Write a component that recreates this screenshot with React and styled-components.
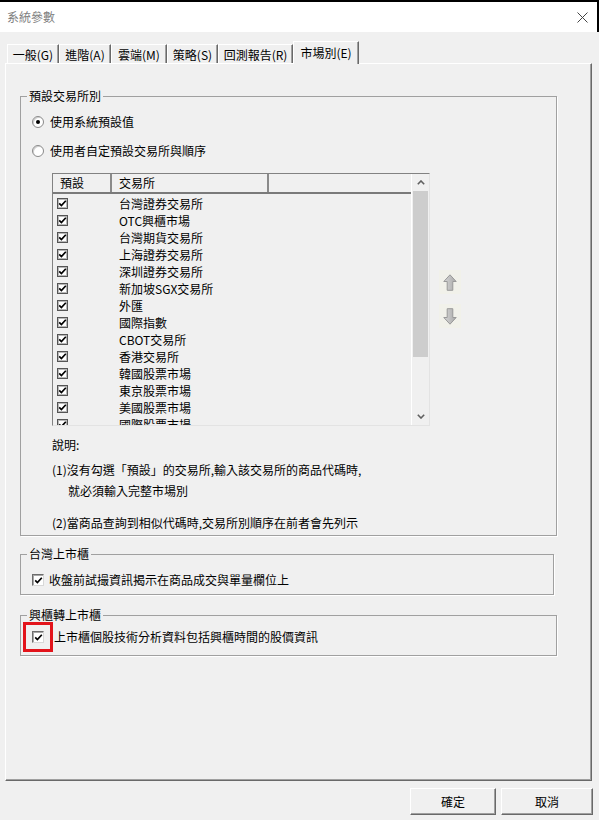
import React from "react"
import styled, { createGlobalStyle } from "styled-components"

const GlobalStyle = createGlobalStyle`
  html, body {
    margin: 0;
    padding: 0;
    background: #f0f0f0;
  }
  body {
    font-family: "Noto Sans CJK TC", "Liberation Sans", sans-serif;
    font-size: 12px;
    line-height: 16px;
    color: #000;
  }
`

const exchanges = [
  "台灣證券交易所",
  "OTC興櫃市場",
  "台灣期貨交易所",
  "上海證券交易所",
  "深圳證券交易所",
  "新加坡SGX交易所",
  "外匯",
  "國際指數",
  "CBOT交易所",
  "香港交易所",
  "韓國股票市場",
  "東京股票市場",
  "美國股票市場",
  "國際股票市場",
]

const tabs = [
  { label: "一般(G)", w: 52 },
  { label: "進階(A)", w: 52 },
  { label: "雲端(M)", w: 56 },
  { label: "策略(S)", w: 51 },
  { label: "回測報告(R)", w: 75 },
  { label: "市場別(E)", w: 66, active: true },
]

function CheckMark() {
  return (
    <svg width="9" height="9" viewBox="0 0 9 9">
      <path d="M1.2 4.4 L3.4 6.6 L7.8 1.8" fill="none" stroke="#000" strokeWidth="1.7" />
    </svg>
  )
}

function BlockArrow({ down }) {
  const id = down ? "gdown" : "gup"
  return (
    <svg width="14" height="17" viewBox="0 0 14 17" style={down ? { transform: "scaleY(-1)" } : undefined}>
      <defs>
        <linearGradient id={id} x1="0" y1="0" x2="1" y2="0">
          <stop offset="0" stopColor="#d6d6d6" />
          <stop offset="1" stopColor="#a9a9a9" />
        </linearGradient>
      </defs>
      <path d="M7 0.8 L13.2 7.5 L9.8 7.5 L9.8 16.3 L4.2 16.3 L4.2 7.5 L0.8 7.5 Z" fill={`url(#${id})`} stroke="#999" strokeWidth="1" />
    </svg>
  )
}

function Chevron({ down }) {
  return (
    <svg width="8" height="5" viewBox="0 0 8 5">
      <path d={down ? "M0.8 0.8 L4 4 L7.2 0.8" : "M0.8 4.2 L4 1 L7.2 4.2"} fill="none" stroke="#606060" strokeWidth="1.6" />
    </svg>
  )
}

export default function App() {
  return (
    <>
      <GlobalStyle />
      <Window>
        <TitleBar>
          <Title>系統參數</Title>
          <CloseIcon width="11" height="11" viewBox="0 0 11 11">
            <path d="M0.5 0.5 L10.5 10.5 M10.5 0.5 L0.5 10.5" stroke="#444" strokeWidth="1" />
          </CloseIcon>
        </TitleBar>

        <Body>
          <TabStrip>
            {tabs.map(t => (
              <Tab key={t.label} $w={t.w} $active={t.active}>{t.label}</Tab>
            ))}
          </TabStrip>

          <Panel>
            <Group $w={537}>
              <Legend>預設交易所別</Legend>
              <GroupBody $top={10} $bottom={4}>
                <RadioRow>
                  <Radio $on />
                  <span>使用系統預設值</span>
                </RadioRow>
                <RadioRow $mt={13}>
                  <Radio />
                  <span>使用者自定預設交易所與順序</span>
                </RadioRow>

                <ListArea>
                  <ListView>
                    <ListMain>
                      <Header>
                        <HeadCell $w={59}>預設</HeadCell>
                        <HeadCell $w={157}>交易所</HeadCell>
                        <HeadCell $grow />
                      </Header>
                      <Rows>
                        {exchanges.map(name => (
                          <Row key={name}>
                            <CheckCell>
                              <Check $size={11}><CheckMark /></Check>
                            </CheckCell>
                            <NameCell>{name}</NameCell>
                          </Row>
                        ))}
                      </Rows>
                    </ListMain>
                    <ScrollBar>
                      <ScrollButton><Chevron /></ScrollButton>
                      <Thumb />
                      <ScrollTrack />
                      <ScrollButton><Chevron down /></ScrollButton>
                    </ScrollBar>
                  </ListView>

                  <MoveButtons>
                    <MoveButton><BlockArrow /></MoveButton>
                    <MoveButton><BlockArrow down /></MoveButton>
                  </MoveButtons>
                </ListArea>

                <Note $mt={11}>說明:</Note>
                <Note $mt={9}>(1)沒有勾選「預設」的交易所,輸入該交易所的商品代碼時,</Note>
                <Note $mt={5} $indent={16}>就必須輸入完整市場別</Note>
                <Note $mt={16}>(2)當商品查詢到相似代碼時,交易所別順序在前者會先列示</Note>
              </GroupBody>
            </Group>

            <Group $w={534} $mt={10}>
              <Legend>台灣上市櫃</Legend>
              <GroupBody $top={10} $bottom={6}>
                <CheckRow $gap={5}>
                  <Check $size={12} $sunken><CheckMark /></Check>
                  <span>收盤前試撮資訊揭示在商品成交與單量欄位上</span>
                </CheckRow>
              </GroupBody>
            </Group>

            <Group $w={537} $mt={12}>
              <Legend>興櫃轉上市櫃</Legend>
              <GroupBody $top={6} $bottom={10}>
                <CheckRow $gap={10}>
                  <Marked>
                    <Check $size={12} $sunken><CheckMark /></Check>
                    <RedMark />
                  </Marked>
                  <span>上市櫃個股技術分析資料包括興櫃時間的股價資訊</span>
                </CheckRow>
              </GroupBody>
            </Group>
          </Panel>

          <ButtonRow>
            <Button $w={86}>確定</Button>
            <Button $w={92}>取消</Button>
          </ButtonRow>
        </Body>
      </Window>
    </>
  )
}

const Window = styled.div`
  width: 599px;
  height: 820px;
  box-sizing: border-box;
  border-top: 2px solid #000;
  display: flex;
  flex-direction: column;
  background: #f0f0f0;
  overflow: hidden;
`

const TitleBar = styled.div`
  height: 30px;
  flex: none;
  background: #fff;
  border-right: 2px solid #000;
  display: flex;
  align-items: center;
  justify-content: space-between;
  padding: 0 9px 0 7px;
`

const Title = styled.span`
  color: #808080;
  font-size: 12px;
`

const CloseIcon = styled.svg`
  display: block;
`

const Body = styled.div`
  flex: 1;
  display: flex;
  flex-direction: column;
  padding: 9px 7px 5px 5px;
  min-height: 0;
`

const TabStrip = styled.div`
  height: 22px;
  flex: none;
  display: flex;
  align-items: flex-end;
  padding-left: 2px;
  position: relative;
  z-index: 1;
`

const Tab = styled.div`
  width: ${p => p.$w}px;
  height: ${p => (p.$active ? 23 : 19)}px;
  margin-bottom: ${p => (p.$active ? -1 : 0)}px;
  box-sizing: border-box;
  flex: none;
  display: flex;
  align-items: center;
  justify-content: center;
  padding-top: ${p => (p.$active ? 0 : 1)}px;
  background: #f0f0f0;
  border-top: 1px solid #fff;
  border-left: 1px solid #fff;
  border-right: 1px solid #696969;
  box-shadow: inset -1px 0 0 #a0a0a0;
  white-space: nowrap;
`

const Panel = styled.div`
  flex: 1;
  box-sizing: border-box;
  border-top: 1px solid #fff;
  border-left: 1px solid #fff;
  border-right: 1px solid #696969;
  border-bottom: 1px solid #696969;
  box-shadow: inset -1px -1px 0 #a0a0a0;
  padding: 24px 0 0 14px;
  display: flex;
  flex-direction: column;
  align-items: flex-start;
`

const Group = styled.fieldset`
  margin: ${p => p.$mt || 0}px 0 0 0;
  padding: 0;
  min-width: 0;
  width: ${p => p.$w}px;
  box-sizing: border-box;
  border: 1px solid #a0a0a0;
  box-shadow: 1px 1px 0 #fff;
`

const Legend = styled.legend`
  margin-left: 6px;
  padding: 0 2px;
  line-height: 16px;
`

const GroupBody = styled.div`
  display: flex;
  flex-direction: column;
  align-items: flex-start;
  padding: ${p => p.$top}px 0 ${p => p.$bottom}px 11px;
`

const RadioRow = styled.div`
  display: flex;
  align-items: center;
  gap: 6px;
  height: 16px;
  margin-top: ${p => p.$mt || 0}px;
`

const Radio = styled.span`
  width: 12px;
  height: 12px;
  box-sizing: border-box;
  border-radius: 50%;
  border: 1px solid #8a8a8a;
  background: #fff;
  display: inline-flex;
  align-items: center;
  justify-content: center;
  box-shadow: inset 1px 1px 0 #d0d0d0;
  &::after {
    content: "";
    width: 4px;
    height: 4px;
    border-radius: 50%;
    background: ${p => (p.$on ? "#000" : "transparent")};
  }
`

const ListArea = styled.div`
  display: flex;
  margin: 14px 0 0 20px;
`

const ListView = styled.div`
  width: 378px;
  height: 253px;
  box-sizing: border-box;
  display: flex;
  border-top: 1px solid #828282;
  border-left: 1px solid #828282;
  border-right: 1px solid #e3e3e3;
  border-bottom: 1px solid #e3e3e3;
  background: #f0f0f0;
`

const ListMain = styled.div`
  flex: 1;
  display: flex;
  flex-direction: column;
  overflow: hidden;
`

const Header = styled.div`
  height: 18px;
  flex: none;
  display: flex;
  border-bottom: 2px solid #7a7a7a;
`

const HeadCell = styled.div`
  width: ${p => (p.$grow ? "auto" : `${p.$w}px`)};
  flex: ${p => (p.$grow ? 1 : "none")};
  box-sizing: border-box;
  padding-left: 7px;
  display: flex;
  align-items: center;
  border-right: ${p => (p.$grow ? "none" : "2px solid #8a8a8a")};
`

const Rows = styled.div`
  padding-top: 1px;
`

const Row = styled.div`
  height: 17px;
  display: flex;
  align-items: center;
`

const CheckCell = styled.div`
  width: 59px;
  flex: none;
  padding-left: 4px;
  box-sizing: border-box;
  display: flex;
  align-items: center;
`

const NameCell = styled.div`
  padding-left: 7px;
  white-space: nowrap;
`

const Check = styled.span`
  width: ${p => p.$size}px;
  height: ${p => p.$size}px;
  box-sizing: border-box;
  flex: none;
  display: inline-flex;
  align-items: center;
  justify-content: center;
  background: #fff;
  border: 1px solid;
  border-color: ${p => (p.$sunken ? "#6d6d6d #d8d8d8 #d8d8d8 #6d6d6d" : "#555")};
  box-shadow: ${p => (p.$sunken ? "inset 1px 1px 0 #a8a8a8" : "inset 0 0 0 1px #b8b8b8")};
`

const ScrollBar = styled.div`
  width: 17px;
  flex: none;
  display: flex;
  flex-direction: column;
  border-left: 1px solid #fff;
  background: #f0f0f0;
`

const ScrollButton = styled.div`
  height: 17px;
  flex: none;
  display: flex;
  align-items: center;
  justify-content: center;
`

const Thumb = styled.div`
  height: 166px;
  flex: none;
  margin: 0 1px;
  background: #cdcdcd;
`

const ScrollTrack = styled.div`
  flex: 1;
`

const MoveButtons = styled.div`
  display: flex;
  flex-direction: column;
  gap: 10px;
  margin-left: 9px;
  padding-top: 97px;
`

const MoveButton = styled.div`
  width: 22px;
  height: 24px;
  display: flex;
  align-items: center;
  justify-content: center;
  background: #f1f1ea;
`

const Note = styled.div`
  margin: ${p => p.$mt || 0}px 0 0 ${p => 20 + (p.$indent || 0)}px;
  white-space: nowrap;
`

const CheckRow = styled.div`
  display: flex;
  align-items: center;
  gap: ${p => p.$gap}px;
  height: 16px;
`

const Marked = styled.span`
  position: relative;
  display: inline-flex;
`

const RedMark = styled.span`
  position: absolute;
  left: -9px;
  top: -9px;
  width: 30px;
  height: 30px;
  box-sizing: border-box;
  border: 3px solid #e3141b;
`

const ButtonRow = styled.div`
  flex: none;
  display: flex;
  justify-content: flex-end;
  gap: 5px;
  margin-top: 7px;
  margin-right: -1px;
`

const Button = styled.div`
  width: ${p => p.$w}px;
  height: 27px;
  box-sizing: border-box;
  display: flex;
  align-items: center;
  justify-content: center;
  background: #f0f0f0;
  border-top: 1px solid #fff;
  border-left: 1px solid #fff;
  border-right: 1px solid #696969;
  border-bottom: 1px solid #696969;
  box-shadow: inset -1px -1px 0 #a0a0a0;
`
